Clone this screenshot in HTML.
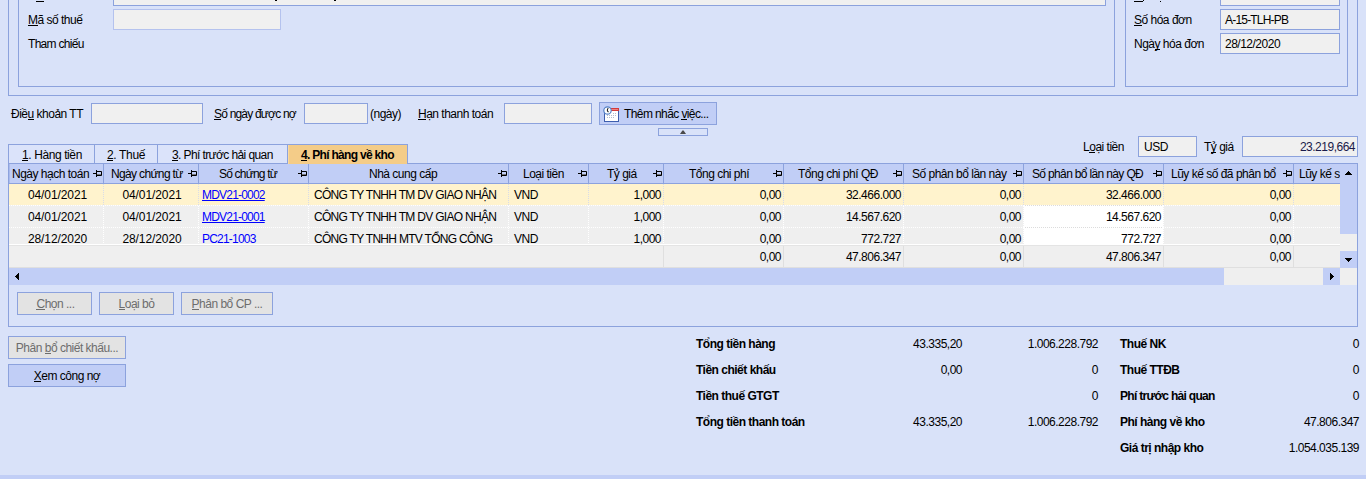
<!DOCTYPE html>
<html><head><meta charset="utf-8"><style>*{box-sizing:border-box;margin:0;padding:0}
html,body{width:1366px;height:479px;overflow:hidden;background:#D9E2F9;font-family:"Liberation Sans",sans-serif;font-size:12px;letter-spacing:-0.5px;color:#000}
.a{position:absolute}
.t{position:absolute;white-space:nowrap;line-height:15px}
u{text-decoration:none;border-bottom:1px solid currentColor;display:inline-block;line-height:11px;height:11px}
.lk{text-decoration:underline}
.b{font-weight:bold}
.dot{background-image:linear-gradient(to right,#FFFFFF 50%,transparent 50%);background-size:2px 1px}
.vdot{background-image:linear-gradient(to bottom,#FFFFFF 50%,transparent 50%);background-size:1px 2px}
.dotg{background-image:linear-gradient(to right,#DCDCDC 50%,transparent 50%);background-size:2px 1px;background-position:1px 0}
.vdotc{background-image:linear-gradient(to bottom,#D8DCE8 50%,transparent 50%);background-size:1px 2px}
</style></head><body>
<div class="a" style="left:8px;top:-120px;width:1350px;height:216px;border:1px solid #8CA2DD;"></div>
<div class="a" style="left:18px;top:-120px;width:1097px;height:207px;border:1px solid #8CA2DD;"></div>
<div class="a" style="left:1125px;top:-120px;width:223px;height:207px;border:1px solid #8CA2DD;"></div>
<div class="a" style="left:113px;top:-20px;width:993px;height:26px;border:1px solid #8CA2DD;background:#F0F0F0;"></div>
<div class="a" style="left:275px;top:0px;width:2px;height:1px;background:#000"></div>
<div class="a" style="left:334px;top:0px;width:2px;height:1px;background:#000"></div>
<div class="a" style="left:36px;top:1px;width:8px;height:1px;background:#000"></div>
<div class="a" style="left:113px;top:9px;width:168px;height:21px;border:1px solid #B4C2EE;background:#F0F0F0;"></div>
<div class="t " style="left:28px;top:13px;"><u>M</u>ã số thuế</div>
<div class="t " style="left:28px;top:37px;letter-spacing:-0.7px">Tham chiếu</div>
<div class="a" style="left:1134px;top:1px;width:9px;height:1px;background:#000"></div>
<div class="a" style="left:1143px;top:0px;width:1px;height:1px;background:#000"></div>
<div class="a" style="left:1160px;top:1px;width:1px;height:1px;background:#000"></div>
<div class="a" style="left:1220px;top:-20px;width:120px;height:26px;border:1px solid #8CA2DD;background:#F0F0F0;"></div>
<div class="t " style="left:1134px;top:13px;"><u>S</u>ố hóa đơn</div>
<div class="a" style="left:1220px;top:9px;width:120px;height:21px;border:1px solid #8CA2DD;background:#F0F0F0;"></div>
<div class="t " style="left:1225px;top:13px;letter-spacing:-0.8px">A-15-TLH-PB</div>
<div class="t " style="left:1134px;top:37px;">Ngà<u>y</u> hóa đơn</div>
<div class="a" style="left:1220px;top:33px;width:120px;height:21px;border:1px solid #8CA2DD;background:#F0F0F0;"></div>
<div class="t " style="left:1225px;top:37px;">28/12/2020</div>
<div class="t " style="left:11px;top:107px;">Điề<u>u</u> khoản TT</div>
<div class="a" style="left:91px;top:103px;width:112px;height:21px;border:1px solid #8CA2DD;background:#F0F0F0;"></div>
<div class="t " style="left:214px;top:107px;letter-spacing:-0.8px"><u>S</u>ố ngày được nợ</div>
<div class="a" style="left:304px;top:103px;width:64px;height:21px;border:1px solid #8CA2DD;background:#F0F0F0;"></div>
<div class="t " style="left:370px;top:107px;">(ngày)</div>
<div class="t " style="left:418px;top:107px;"><u>H</u>ạn thanh toán</div>
<div class="a" style="left:504px;top:103px;width:88px;height:21px;border:1px solid #8CA2DD;background:#F0F0F0;"></div>
<div class="a" style="left:599px;top:102px;width:118px;height:23px;border:1px solid #8CA2DD;background:#C1CEF6;"></div>
<div class="t " style="left:624px;top:107px;letter-spacing:-0.6px">Thêm nhắc <u>v</u>iệc...</div>
<svg class="a" style="left:602px;top:105px" width="18" height="18" viewBox="0 0 18 18">
<rect x="2.5" y="3.5" width="14" height="13" fill="#FFFFFF" stroke="#3E5EAE" stroke-width="1"/>
<rect x="2" y="3" width="15" height="3" fill="#D23A3A"/>
<rect x="7" y="4" width="9" height="1" fill="#EE8080"/>
<g fill="#B4BCD0"><rect x="11" y="8" width="1" height="1"/><rect x="13" y="8" width="1" height="1"/>
<rect x="5" y="10" width="1" height="1"/><rect x="7" y="10" width="1" height="1"/><rect x="9" y="10" width="1" height="1"/><rect x="11" y="10" width="1" height="1"/><rect x="13" y="10" width="1" height="1"/>
<rect x="5" y="12" width="1" height="1"/><rect x="7" y="12" width="1" height="1"/><rect x="9" y="12" width="1" height="1"/><rect x="11" y="12" width="1" height="1"/></g>
<circle cx="5.5" cy="5.5" r="3.7" fill="#FFFFFF" stroke="#5582C8" stroke-width="1.2"/>
<path d="M6.3 3.2Q4.3 5.2 6.5 7.2" stroke="#222" stroke-width="1.1" fill="none"/>
</svg>
<div class="a" style="left:658px;top:128px;width:50px;height:8px;border:1px solid #8CA2DD;"></div>
<svg class="a" style="left:680px;top:130px" width="6" height="4"><path d="M0 4L2.4 0.6H3.6L6 4Z" fill="#4A4A4A"/></svg>
<div class="t " style="left:1083px;top:140px;">L<u>o</u>ại tiền</div>
<div class="a" style="left:1138px;top:136px;width:59px;height:21px;border:1px solid #8CA2DD;background:#F0F0F0;"></div>
<div class="t " style="left:1144px;top:140px;">USD</div>
<div class="t " style="left:1204px;top:140px;">T<u>ỷ</u> giá</div>
<div class="a" style="left:1242px;top:136px;width:116px;height:21px;border:1px solid #8CA2DD;background:#F0F0F0;"></div>
<div class="t " style="right:11px;top:140px;color:#1A1A4A">23.219,664</div>
<div class="a" style="left:8px;top:163px;width:1350px;height:164px;border:1px solid #8CA2DD;"></div>
<div class="a" style="left:8px;top:144px;width:87px;height:20px;border:1px solid #8CA2DD;background:#DBE3FA;"></div>
<div class="a" style="left:94px;top:144px;width:64px;height:20px;border:1px solid #8CA2DD;background:#DBE3FA;"></div>
<div class="a" style="left:157px;top:144px;width:131px;height:20px;border:1px solid #8CA2DD;background:#DBE3FA;"></div>
<div class="a" style="left:287px;top:144px;width:121px;height:20px;border:1px solid #8CA2DD;background:#F4CC88;border-bottom:none"></div>
<div class="a" style="left:288px;top:145px;width:1px;height:19px;background:#F9D9A0"></div>
<div class="t " style="left:22px;top:148px;letter-spacing:-0.4px"><u>1</u>. Hàng tiền</div>
<div class="t " style="left:107px;top:148px;letter-spacing:-0.35px"><u>2</u>. Thuế</div>
<div class="t " style="left:172px;top:148px;letter-spacing:-0.6px"><u>3</u>. Phí trước hải quan</div>
<div class="t b" style="left:301px;top:148px;letter-spacing:-0.7px"><u>4</u>. Phí hàng về kho</div>
<div class="a" style="left:9px;top:164px;width:1331px;height:19px;background:#C1CEF6"></div>
<div class="a" style="left:9px;top:164px;width:1px;height:19px;background:#A9BBEC"></div>
<div class="a" style="left:9px;top:183px;width:1331px;height:1px;background:#8CA2DD"></div>
<div class="a" style="left:103px;top:164px;width:1px;height:19px;background:#8CA2DD"></div>
<div class="a" style="left:198px;top:164px;width:1px;height:19px;background:#8CA2DD"></div>
<div class="a" style="left:308px;top:164px;width:1px;height:19px;background:#8CA2DD"></div>
<div class="a" style="left:508px;top:164px;width:1px;height:19px;background:#8CA2DD"></div>
<div class="a" style="left:588px;top:164px;width:1px;height:19px;background:#8CA2DD"></div>
<div class="a" style="left:663px;top:164px;width:1px;height:19px;background:#8CA2DD"></div>
<div class="a" style="left:783px;top:164px;width:1px;height:19px;background:#8CA2DD"></div>
<div class="a" style="left:903px;top:164px;width:1px;height:19px;background:#8CA2DD"></div>
<div class="a" style="left:1023px;top:164px;width:1px;height:19px;background:#8CA2DD"></div>
<div class="a" style="left:1163px;top:164px;width:1px;height:19px;background:#8CA2DD"></div>
<div class="a" style="left:1293px;top:164px;width:1px;height:19px;background:#8CA2DD"></div>
<div class="t " style="left:12px;top:167px;">Ngày hạch toán</div>
<svg class="a" style="left:93px;top:170px" width="9" height="7" viewBox="0 0 9 7"><path d="M0 3.5h3M3.5 0v7M4 1.5h4.5v4h-4.5" stroke="#000" stroke-width="1" fill="none"/><path d="M4 4.5h4" stroke="#777" stroke-width="1"/></svg>
<div class="t " style="left:111px;top:167px;letter-spacing:-0.65px">Ngày chứng từ</div>
<svg class="a" style="left:188px;top:170px" width="9" height="7" viewBox="0 0 9 7"><path d="M0 3.5h3M3.5 0v7M4 1.5h4.5v4h-4.5" stroke="#000" stroke-width="1" fill="none"/><path d="M4 4.5h4" stroke="#777" stroke-width="1"/></svg>
<div class="t " style="left:219px;top:167px;letter-spacing:-0.8px">Số chứng từ</div>
<svg class="a" style="left:298px;top:170px" width="9" height="7" viewBox="0 0 9 7"><path d="M0 3.5h3M3.5 0v7M4 1.5h4.5v4h-4.5" stroke="#000" stroke-width="1" fill="none"/><path d="M4 4.5h4" stroke="#777" stroke-width="1"/></svg>
<div class="t " style="left:369px;top:167px;">Nhà cung cấp</div>
<svg class="a" style="left:498px;top:170px" width="9" height="7" viewBox="0 0 9 7"><path d="M0 3.5h3M3.5 0v7M4 1.5h4.5v4h-4.5" stroke="#000" stroke-width="1" fill="none"/><path d="M4 4.5h4" stroke="#777" stroke-width="1"/></svg>
<div class="t " style="left:523px;top:167px;">Loại tiền</div>
<svg class="a" style="left:578px;top:170px" width="9" height="7" viewBox="0 0 9 7"><path d="M0 3.5h3M3.5 0v7M4 1.5h4.5v4h-4.5" stroke="#000" stroke-width="1" fill="none"/><path d="M4 4.5h4" stroke="#777" stroke-width="1"/></svg>
<div class="t " style="left:607px;top:167px;">Tỷ giá</div>
<svg class="a" style="left:653px;top:170px" width="9" height="7" viewBox="0 0 9 7"><path d="M0 3.5h3M3.5 0v7M4 1.5h4.5v4h-4.5" stroke="#000" stroke-width="1" fill="none"/><path d="M4 4.5h4" stroke="#777" stroke-width="1"/></svg>
<div class="t " style="left:689px;top:167px;">Tổng chi phí</div>
<svg class="a" style="left:773px;top:170px" width="9" height="7" viewBox="0 0 9 7"><path d="M0 3.5h3M3.5 0v7M4 1.5h4.5v4h-4.5" stroke="#000" stroke-width="1" fill="none"/><path d="M4 4.5h4" stroke="#777" stroke-width="1"/></svg>
<div class="t " style="left:798px;top:167px;">Tổng chi phí QĐ</div>
<svg class="a" style="left:893px;top:170px" width="9" height="7" viewBox="0 0 9 7"><path d="M0 3.5h3M3.5 0v7M4 1.5h4.5v4h-4.5" stroke="#000" stroke-width="1" fill="none"/><path d="M4 4.5h4" stroke="#777" stroke-width="1"/></svg>
<div class="t " style="left:912px;top:167px;">Số phân bổ lần này</div>
<svg class="a" style="left:1013px;top:170px" width="9" height="7" viewBox="0 0 9 7"><path d="M0 3.5h3M3.5 0v7M4 1.5h4.5v4h-4.5" stroke="#000" stroke-width="1" fill="none"/><path d="M4 4.5h4" stroke="#777" stroke-width="1"/></svg>
<div class="t " style="left:1032px;top:167px;letter-spacing:-0.65px">Số phân bổ lần này QĐ</div>
<svg class="a" style="left:1153px;top:170px" width="9" height="7" viewBox="0 0 9 7"><path d="M0 3.5h3M3.5 0v7M4 1.5h4.5v4h-4.5" stroke="#000" stroke-width="1" fill="none"/><path d="M4 4.5h4" stroke="#777" stroke-width="1"/></svg>
<div class="t " style="left:1171px;top:167px;">Lũy kế số đã phân bổ</div>
<svg class="a" style="left:1283px;top:170px" width="9" height="7" viewBox="0 0 9 7"><path d="M0 3.5h3M3.5 0v7M4 1.5h4.5v4h-4.5" stroke="#000" stroke-width="1" fill="none"/><path d="M4 4.5h4" stroke="#777" stroke-width="1"/></svg>
<div class="t" style="left:1299px;top:167px;width:41px;overflow:hidden">Lũy kế s</div>
<div class="a" style="left:9px;top:184px;width:1331px;height:21px;background:#FFF3CD"></div>
<div class="a" style="left:9px;top:205px;width:1331px;height:1px;background:#EFEFEF"></div>
<div class="a dot" style="left:9px;top:205px;width:1331px;height:1px"></div>
<div class="a" style="left:1024px;top:205px;width:139px;height:1px;background:#FFFFFF"></div>
<div class="a dotg" style="left:1024px;top:205px;width:139px;height:1px"></div>
<div class="a vdotc" style="left:103px;top:184px;width:1px;height:22px"></div>
<div class="a vdotc" style="left:198px;top:184px;width:1px;height:22px"></div>
<div class="a vdotc" style="left:308px;top:184px;width:1px;height:22px"></div>
<div class="a vdotc" style="left:508px;top:184px;width:1px;height:22px"></div>
<div class="a vdotc" style="left:588px;top:184px;width:1px;height:22px"></div>
<div class="a vdotc" style="left:663px;top:184px;width:1px;height:22px"></div>
<div class="a vdotc" style="left:783px;top:184px;width:1px;height:22px"></div>
<div class="a vdotc" style="left:903px;top:184px;width:1px;height:22px"></div>
<div class="a vdotc" style="left:1023px;top:184px;width:1px;height:22px"></div>
<div class="a vdotc" style="left:1163px;top:184px;width:1px;height:22px"></div>
<div class="a vdotc" style="left:1293px;top:184px;width:1px;height:22px"></div>
<div class="t " style="left:11px;width:93px;text-align:center;top:188px;letter-spacing:-0.1px;">04/01/2021</div>
<div class="t " style="left:105px;width:94px;text-align:center;top:188px;letter-spacing:-0.1px;">04/01/2021</div>
<div class="t lk" style="left:202px;top:188px;color:#0000FF;letter-spacing:-0.8px;">MDV21-0002</div>
<div class="t " style="left:314px;top:188px;letter-spacing:-0.7px;">CÔNG TY TNHH TM DV GIAO NHẬN</div>
<div class="t " style="left:514px;top:188px;">VND</div>
<div class="t " style="right:705px;top:188px;">1,000</div>
<div class="t " style="right:585px;top:188px;">0,00</div>
<div class="t " style="right:465px;top:188px;">32.466.000</div>
<div class="t " style="right:345px;top:188px;">0,00</div>
<div class="t " style="right:205px;top:188px;">32.466.000</div>
<div class="t " style="right:75px;top:188px;">0,00</div>
<div class="a" style="left:9px;top:206px;width:1331px;height:21px;background:#EFEFEF"></div>
<div class="a" style="left:1024px;top:206px;width:139px;height:21px;background:#FFFFFF"></div>
<div class="a" style="left:9px;top:227px;width:1331px;height:1px;background:#EFEFEF"></div>
<div class="a dot" style="left:9px;top:227px;width:1331px;height:1px"></div>
<div class="a" style="left:1024px;top:227px;width:139px;height:1px;background:#FFFFFF"></div>
<div class="a dotg" style="left:1024px;top:227px;width:139px;height:1px"></div>
<div class="a vdot" style="left:103px;top:206px;width:1px;height:22px"></div>
<div class="a vdot" style="left:198px;top:206px;width:1px;height:22px"></div>
<div class="a vdot" style="left:308px;top:206px;width:1px;height:22px"></div>
<div class="a vdot" style="left:508px;top:206px;width:1px;height:22px"></div>
<div class="a vdot" style="left:588px;top:206px;width:1px;height:22px"></div>
<div class="a vdot" style="left:663px;top:206px;width:1px;height:22px"></div>
<div class="a vdot" style="left:783px;top:206px;width:1px;height:22px"></div>
<div class="a vdot" style="left:903px;top:206px;width:1px;height:22px"></div>
<div class="a vdot" style="left:1023px;top:206px;width:1px;height:22px"></div>
<div class="a vdot" style="left:1163px;top:206px;width:1px;height:22px"></div>
<div class="a vdot" style="left:1293px;top:206px;width:1px;height:22px"></div>
<div class="t " style="left:11px;width:93px;text-align:center;top:210px;letter-spacing:-0.1px;">04/01/2021</div>
<div class="t " style="left:105px;width:94px;text-align:center;top:210px;letter-spacing:-0.1px;">04/01/2021</div>
<div class="t lk" style="left:202px;top:210px;color:#0000FF;letter-spacing:-0.8px;">MDV21-0001</div>
<div class="t " style="left:314px;top:210px;letter-spacing:-0.7px;">CÔNG TY TNHH TM DV GIAO NHẬN</div>
<div class="t " style="left:514px;top:210px;">VND</div>
<div class="t " style="right:705px;top:210px;">1,000</div>
<div class="t " style="right:585px;top:210px;">0,00</div>
<div class="t " style="right:465px;top:210px;">14.567.620</div>
<div class="t " style="right:345px;top:210px;">0,00</div>
<div class="t " style="right:205px;top:210px;">14.567.620</div>
<div class="t " style="right:75px;top:210px;">0,00</div>
<div class="a" style="left:9px;top:228px;width:1331px;height:16px;background:#EFEFEF"></div>
<div class="a" style="left:1024px;top:228px;width:139px;height:16px;background:#FFFFFF"></div>
<div class="a" style="left:9px;top:244px;width:1331px;height:1px;background:#FFFFFF"></div>
<div class="a vdot" style="left:103px;top:228px;width:1px;height:17px"></div>
<div class="a vdot" style="left:198px;top:228px;width:1px;height:17px"></div>
<div class="a vdot" style="left:308px;top:228px;width:1px;height:17px"></div>
<div class="a vdot" style="left:508px;top:228px;width:1px;height:17px"></div>
<div class="a vdot" style="left:588px;top:228px;width:1px;height:17px"></div>
<div class="a vdot" style="left:663px;top:228px;width:1px;height:17px"></div>
<div class="a vdot" style="left:783px;top:228px;width:1px;height:17px"></div>
<div class="a vdot" style="left:903px;top:228px;width:1px;height:17px"></div>
<div class="a vdot" style="left:1023px;top:228px;width:1px;height:17px"></div>
<div class="a vdot" style="left:1163px;top:228px;width:1px;height:17px"></div>
<div class="a vdot" style="left:1293px;top:228px;width:1px;height:17px"></div>
<div class="t " style="left:11px;width:93px;text-align:center;top:232px;letter-spacing:-0.1px;">28/12/2020</div>
<div class="t " style="left:105px;width:94px;text-align:center;top:232px;letter-spacing:-0.1px;">28/12/2020</div>
<div class="t " style="left:202px;top:232px;color:#0000FF;letter-spacing:-0.8px;">PC21-1003</div>
<div class="t " style="left:314px;top:232px;letter-spacing:-0.7px;">CÔNG TY TNHH MTV TỔNG CÔNG</div>
<div class="t " style="left:514px;top:232px;">VND</div>
<div class="t " style="right:705px;top:232px;">1,000</div>
<div class="t " style="right:585px;top:232px;">0,00</div>
<div class="t " style="right:465px;top:232px;">772.727</div>
<div class="t " style="right:345px;top:232px;">0,00</div>
<div class="t " style="right:205px;top:232px;">772.727</div>
<div class="t " style="right:75px;top:232px;">0,00</div>
<div class="a" style="left:9px;top:245px;width:1331px;height:23px;background:#EFEFEF"></div>
<div class="a" style="left:9px;top:245px;width:1331px;height:1px;background:#E4E4E4"></div>
<div class="a" style="left:663px;top:246px;width:1px;height:21px;background:#DFDFDF"></div>
<div class="a" style="left:783px;top:246px;width:1px;height:21px;background:#DFDFDF"></div>
<div class="a" style="left:903px;top:246px;width:1px;height:21px;background:#DFDFDF"></div>
<div class="a" style="left:1023px;top:246px;width:1px;height:21px;background:#DFDFDF"></div>
<div class="a" style="left:1163px;top:246px;width:1px;height:21px;background:#DFDFDF"></div>
<div class="a" style="left:1293px;top:246px;width:1px;height:21px;background:#DFDFDF"></div>
<div class="a" style="left:9px;top:267px;width:1331px;height:1px;background:#DFDFDF"></div>
<div class="t " style="right:585px;top:250px;">0,00</div>
<div class="t " style="right:465px;top:250px;">47.806.347</div>
<div class="t " style="right:345px;top:250px;">0,00</div>
<div class="t " style="right:205px;top:250px;">47.806.347</div>
<div class="t " style="right:75px;top:250px;">0,00</div>
<div class="a" style="left:1340px;top:164px;width:17px;height:70px;background:#C1CEF6"></div>
<div class="a" style="left:1340px;top:234px;width:17px;height:17px;background:#EFEFEF"></div>
<div class="a" style="left:1340px;top:251px;width:17px;height:17px;background:#C1CEF6"></div>
<div class="a" style="left:1348px;top:171px;width:1px;height:1px;background:#000"></div>
<div class="a" style="left:1347px;top:172px;width:3px;height:1px;background:#000"></div>
<div class="a" style="left:1346px;top:173px;width:5px;height:1px;background:#000"></div>
<div class="a" style="left:1345px;top:174px;width:7px;height:1px;background:#000"></div>
<div class="a" style="left:1348px;top:261px;width:1px;height:1px;background:#000"></div>
<div class="a" style="left:1347px;top:260px;width:3px;height:1px;background:#000"></div>
<div class="a" style="left:1346px;top:259px;width:5px;height:1px;background:#000"></div>
<div class="a" style="left:1345px;top:258px;width:7px;height:1px;background:#000"></div>
<div class="a" style="left:9px;top:268px;width:1348px;height:17px;background:#EFEFEF"></div>
<div class="a" style="left:9px;top:268px;width:1215px;height:17px;background:#C1CEF6"></div>
<div class="a" style="left:1323px;top:268px;width:17px;height:17px;background:#C1CEF6"></div>
<div class="a" style="left:15px;top:276px;width:1px;height:1px;background:#000"></div>
<div class="a" style="left:16px;top:275px;width:1px;height:3px;background:#000"></div>
<div class="a" style="left:17px;top:274px;width:1px;height:5px;background:#000"></div>
<div class="a" style="left:18px;top:273px;width:1px;height:7px;background:#000"></div>
<div class="a" style="left:1333px;top:276px;width:1px;height:1px;background:#000"></div>
<div class="a" style="left:1332px;top:275px;width:1px;height:3px;background:#000"></div>
<div class="a" style="left:1331px;top:274px;width:1px;height:5px;background:#000"></div>
<div class="a" style="left:1330px;top:273px;width:1px;height:7px;background:#000"></div>
<div class="a" style="left:17px;top:292px;width:75px;height:23px;border:1px solid #8CA2DD;background:#E3E3E3;"></div>
<div class="t " style="left:18px;width:75px;text-align:center;top:297px;color:#6D6D6D"><u>C</u>họn ...</div>
<div class="a" style="left:99px;top:292px;width:75px;height:23px;border:1px solid #8CA2DD;background:#E3E3E3;"></div>
<div class="t " style="left:99px;width:75px;text-align:center;top:297px;color:#6D6D6D"><u>L</u>oại bỏ</div>
<div class="a" style="left:181px;top:292px;width:92px;height:23px;border:1px solid #8CA2DD;background:#E3E3E3;"></div>
<div class="t " style="left:181px;width:92px;text-align:center;top:297px;color:#6D6D6D"><u>P</u>hân bổ CP ...</div>
<div class="a" style="left:8px;top:336px;width:118px;height:23px;border:1px solid #8CA2DD;background:#E3E3E3;"></div>
<div class="t " style="left:8px;width:118px;text-align:center;top:341px;color:#6D6D6D">Phân <u>b</u>ổ chiết khấu...</div>
<div class="a" style="left:8px;top:364px;width:118px;height:23px;border:1px solid #8CA2DD;background:#C1CEF6;"></div>
<div class="t " style="left:8px;width:118px;text-align:center;top:369px;color:#000"><u>X</u>em công nợ</div>
<div class="t b" style="left:696px;top:337px;">Tổng tiền hàng</div>
<div class="t " style="right:404px;top:337px;">43.335,20</div>
<div class="t " style="right:268px;top:337px;">1.006.228.792</div>
<div class="t b" style="left:696px;top:363px;">Tiền chiết khấu</div>
<div class="t " style="right:404px;top:363px;">0,00</div>
<div class="t " style="right:268px;top:363px;">0</div>
<div class="t b" style="left:696px;top:389px;">Tiền thuế GTGT</div>
<div class="t " style="right:268px;top:389px;">0</div>
<div class="t b" style="left:696px;top:415px;">Tổng tiền thanh toán</div>
<div class="t " style="right:404px;top:415px;">43.335,20</div>
<div class="t " style="right:268px;top:415px;">1.006.228.792</div>
<div class="t b" style="left:1120px;top:337px;">Thuế NK</div>
<div class="t " style="right:7px;top:337px;">0</div>
<div class="t b" style="left:1120px;top:363px;">Thuế TTĐB</div>
<div class="t " style="right:7px;top:363px;">0</div>
<div class="t b" style="left:1120px;top:389px;letter-spacing:-0.7px">Phí trước hải quan</div>
<div class="t " style="right:7px;top:389px;">0</div>
<div class="t b" style="left:1120px;top:415px;">Phí hàng về kho</div>
<div class="t " style="right:7px;top:415px;">47.806.347</div>
<div class="t b" style="left:1120px;top:441px;">Giá trị nhập kho</div>
<div class="t " style="right:7px;top:441px;">1.054.035.139</div>
<div class="a" style="left:0px;top:475px;width:1366px;height:4px;background:#C1CEF6"></div>
</body></html>
